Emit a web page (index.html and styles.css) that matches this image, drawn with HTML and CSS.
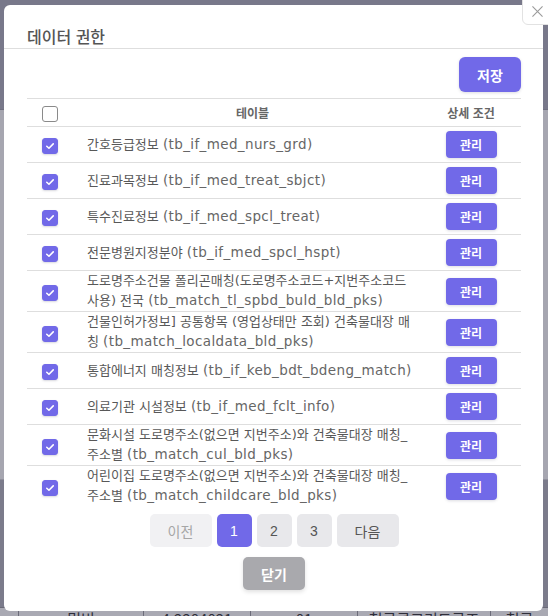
FILE: index.html
```html
<!DOCTYPE html>
<html lang="ko">
<head>
<meta charset="utf-8">
<title>데이터 권한</title>
<link rel="stylesheet" href="styles.css">
</head>
<body>
<div class="bg">
  <div class="bg-top"></div>
  <div class="bg-mid"></div>
  <div class="bg-bottom"></div>
  <div class="bg-row">
    <span class="bg-cell"></span>
    <span class="bg-cell">밉비</span>
    <span class="bg-cell">4.2204021</span>
    <span class="bg-cell">01</span>
    <span class="bg-cell">철근콘크리트구조</span>
    <span class="bg-cell">철근</span>
  </div>
</div>

<div class="modal">
  <div class="modal-header">
    <h2 class="modal-title">데이터 권한</h2>
  </div>
  <div class="modal-body">
    <div class="toolbar">
      <button class="btn btn-primary btn-save">저장</button>
    </div>
    <table class="perm-table">
      <thead>
        <tr>
          <th class="col-check"><span class="chk"></span></th>
          <th class="col-name">테이블</th>
          <th class="col-action">상세 조건</th>
        </tr>
      </thead>
      <tbody>
        <tr>
          <td class="col-check"><span class="chk on"><svg viewBox="0 0 16 16"><path d="M4.3 8.3l2.5 2.3 4.9-5"/></svg></span></td>
          <td class="col-name">간호등급정보 <span class="code">(tb_if_med_nurs_grd)</span></td>
          <td class="col-action"><button class="btn btn-primary btn-manage">관리</button></td>
        </tr>
        <tr>
          <td class="col-check"><span class="chk on"><svg viewBox="0 0 16 16"><path d="M4.3 8.3l2.5 2.3 4.9-5"/></svg></span></td>
          <td class="col-name">진료과목정보 <span class="code">(tb_if_med_treat_sbjct)</span></td>
          <td class="col-action"><button class="btn btn-primary btn-manage">관리</button></td>
        </tr>
        <tr>
          <td class="col-check"><span class="chk on"><svg viewBox="0 0 16 16"><path d="M4.3 8.3l2.5 2.3 4.9-5"/></svg></span></td>
          <td class="col-name">특수진료정보 <span class="code">(tb_if_med_spcl_treat)</span></td>
          <td class="col-action"><button class="btn btn-primary btn-manage">관리</button></td>
        </tr>
        <tr>
          <td class="col-check"><span class="chk on"><svg viewBox="0 0 16 16"><path d="M4.3 8.3l2.5 2.3 4.9-5"/></svg></span></td>
          <td class="col-name">전문병원지정분야 <span class="code">(tb_if_med_spcl_hspt)</span></td>
          <td class="col-action"><button class="btn btn-primary btn-manage">관리</button></td>
        </tr>
        <tr>
          <td class="col-check"><span class="chk on"><svg viewBox="0 0 16 16"><path d="M4.3 8.3l2.5 2.3 4.9-5"/></svg></span></td>
          <td class="col-name">도로명주소건물 폴리곤매칭(도로명주소코드+지번주소코드 사용) 전국 <span class="code">(tb_match_tl_spbd_buld_bld_pks)</span></td>
          <td class="col-action"><button class="btn btn-primary btn-manage">관리</button></td>
        </tr>
        <tr>
          <td class="col-check"><span class="chk on"><svg viewBox="0 0 16 16"><path d="M4.3 8.3l2.5 2.3 4.9-5"/></svg></span></td>
          <td class="col-name">건물인허가정보] 공통항목 (영업상태만 조회) 건축물대장 매칭 <span class="code">(tb_match_localdata_bld_pks)</span></td>
          <td class="col-action"><button class="btn btn-primary btn-manage">관리</button></td>
        </tr>
        <tr>
          <td class="col-check"><span class="chk on"><svg viewBox="0 0 16 16"><path d="M4.3 8.3l2.5 2.3 4.9-5"/></svg></span></td>
          <td class="col-name">통합에너지 매칭정보 <span class="code">(tb_if_keb_bdt_bdeng_match)</span></td>
          <td class="col-action"><button class="btn btn-primary btn-manage">관리</button></td>
        </tr>
        <tr>
          <td class="col-check"><span class="chk on"><svg viewBox="0 0 16 16"><path d="M4.3 8.3l2.5 2.3 4.9-5"/></svg></span></td>
          <td class="col-name">의료기관 시설정보 <span class="code">(tb_if_med_fclt_info)</span></td>
          <td class="col-action"><button class="btn btn-primary btn-manage">관리</button></td>
        </tr>
        <tr>
          <td class="col-check"><span class="chk on"><svg viewBox="0 0 16 16"><path d="M4.3 8.3l2.5 2.3 4.9-5"/></svg></span></td>
          <td class="col-name">문화시설 도로명주소(없으면 지번주소)와 건축물대장 매칭_주소별 <span class="code">(tb_match_cul_bld_pks)</span></td>
          <td class="col-action"><button class="btn btn-primary btn-manage">관리</button></td>
        </tr>
        <tr>
          <td class="col-check"><span class="chk on"><svg viewBox="0 0 16 16"><path d="M4.3 8.3l2.5 2.3 4.9-5"/></svg></span></td>
          <td class="col-name">어린이집 도로명주소(없으면 지번주소)와 건축물대장 매칭_주소별 <span class="code">(tb_match_childcare_bld_pks)</span></td>
          <td class="col-action"><button class="btn btn-primary btn-manage">관리</button></td>
        </tr>
      </tbody>
    </table>
    <div class="pager">
      <button class="pg pg-wide pg-disabled">이전</button>
      <button class="pg pg-num pg-active">1</button>
      <button class="pg pg-num">2</button>
      <button class="pg pg-num">3</button>
      <button class="pg pg-wide">다음</button>
    </div>
    <div class="footer">
      <button class="btn btn-gray">닫기</button>
    </div>
  </div>
</div>

<button class="x-close" aria-label="close">
  <svg viewBox="0 0 12 12"><path d="M0.5 0.5L11.5 11.5M11.5 0.5L0.5 11.5"/></svg>
</button>
</body>
</html>
```

FILE: styles.css
```css
* { box-sizing: border-box; }

html, body {
  margin: 0;
  padding: 0;
  height: 100%;
  overflow: hidden;
}

body {
  font-family: "Open Sans", "Noto Sans CJK KR", sans-serif;
  background: #7a7a8a;
}

/* dimmed page behind the dialog */
.bg {
  display: flex;
  flex-direction: column;
  height: 616px;
}
.bg-top {
  height: 110px;
  background: #78788a;
  border-bottom: 1px solid #6f6f80;
}
.bg-mid {
  height: 370px;
  background: #a6a6b0;
  border-bottom: 1px solid #8f8f9b;
}
.bg-bottom {
  height: 128px;
  background: #7b7b8b;
  border-bottom: 1px solid #6a6a78;
}
.bg-row {
  flex: 1;
  display: grid;
  grid-template-columns: 18px 125px 107px 107px 133px 1fr;
  background: #a9a9b3;
  font-family: "Noto Sans CJK KR", sans-serif;
  font-size: 15px;
  line-height: 20px;
  color: #2e2e3a;
  overflow: hidden;
}
.bg-cell {
  text-align: center;
  border-left: 1px solid #6c6c7a;
  padding-top: 1px;
}
.bg-cell:first-child { border-left: 0; }

/* dialog */
.modal {
  position: fixed;
  top: 5px;
  left: 4px;
  width: 539px;
  height: 606px;
  background: #fff;
  border-radius: 6px;
  display: flex;
  flex-direction: column;
}

.modal-header {
  height: 44px;
  border-bottom: 1px solid #dedede;
  padding: 20px 23px 0;
}
.modal-title {
  margin: 0;
  font-family: "Noto Sans CJK KR", sans-serif;
  font-size: 16px;
  line-height: 22px;
  font-weight: 500;
  color: #555;
}

.modal-body {
  padding: 0 22px 0 23px;
  display: flex;
  flex-direction: column;
}

.toolbar {
  display: flex;
  justify-content: flex-end;
  padding-top: 8px;
  margin-bottom: 6px;
}

.btn {
  border: 0;
  font-family: "Noto Sans CJK KR", sans-serif;
  font-weight: 700;
  color: #fff;
  cursor: pointer;
  padding: 0;
}
.btn-primary {
  background: #7169e8;
  box-shadow: 0 1px 3px rgba(60, 60, 90, 0.18);
}
.btn-save {
  width: 62px;
  height: 35px;
  border-radius: 6px;
  font-size: 14px;
}
.btn-manage {
  width: 51px;
  height: 27px;
  border-radius: 4px;
  font-size: 12px;
  display: block;
  margin: 0 auto;
}
.btn-gray {
  width: 62px;
  height: 33px;
  border-radius: 5px;
  font-size: 14px;
  background: #a9a9ad;
  box-shadow: 0 2px 4px rgba(0, 0, 0, 0.12);
}

/* table */
.perm-table {
  width: 100%;
  border-collapse: collapse;
  table-layout: fixed;
  border-top: 1px solid #dedede;
}
.perm-table th {
  height: 28px;
  padding: 0;
  font-family: "Noto Sans CJK KR", sans-serif;
  font-size: 12px;
  font-weight: 700;
  color: #666;
  border-bottom: 1px solid #dedede;
  vertical-align: middle;
}
.perm-table td {
  border-bottom: 1px solid #dedede;
  vertical-align: middle;
  padding: 4px 0;
}
.perm-table tbody tr:last-child td { border-bottom: 0; }

.col-check { width: 45px; text-align: center; }
.col-action { width: 100px; text-align: center; }
.perm-table th.col-name { padding-left: 12px; text-align: center; }
.perm-table td.col-name {
  padding: 0 6px 0 15px;
  font-family: "DejaVu Sans", "Noto Sans CJK KR", sans-serif;
  font-size: 13px;
  line-height: 20px;
  color: #585858;
}
.code {
  font-size: 13.5px;
  line-height: 16px;
  letter-spacing: 0.38px;
  color: #666;
}

.chk {
  display: inline-block;
  width: 16px;
  height: 16px;
  border: 1px solid #8a8a8a;
  border-radius: 3px;
  vertical-align: middle;
  background: #fff;
}
.chk.on {
  background: #7169e8;
  border-color: #7169e8;
  box-shadow: 0 1px 2px rgba(60, 60, 90, 0.2);
}
.chk svg {
  display: block;
  width: 14px;
  height: 14px;
  fill: none;
  stroke: #fff;
  stroke-width: 1.8;
  stroke-linecap: round;
  stroke-linejoin: round;
}

/* pagination */
.pager {
  display: flex;
  justify-content: center;
  gap: 5px;
  margin-top: 8px;
}
.pg {
  height: 33px;
  border: 0;
  border-radius: 5px;
  background: #e8e8eb;
  color: #555;
  font-family: "Liberation Sans", "Noto Sans CJK KR", sans-serif;
  font-size: 14px;
  padding: 0;
}
.pg-wide { width: 62px; font-family: "Noto Sans CJK KR", sans-serif; }
.pg-num { width: 35px; }
.pg-disabled { background: #f1f1f3; color: #a6a6a6; }
.pg-active { background: #7169e8; color: #fff; }

.footer {
  display: flex;
  justify-content: center;
  margin-top: 10px;
}

/* close button over the dialog corner */
.x-close {
  position: fixed;
  top: -1px;
  left: 522px;
  width: 34px;
  height: 26px;
  background: #fff;
  border: 1px solid #e2e2e2;
  border-radius: 0 0 0 6px;
  padding: 0;
  cursor: pointer;
}
.x-close svg {
  position: absolute;
  left: 9px;
  top: 6px;
  width: 11px;
  height: 11px;
  fill: none;
  stroke: #9a9a9a;
  stroke-width: 1.2;
}
```
